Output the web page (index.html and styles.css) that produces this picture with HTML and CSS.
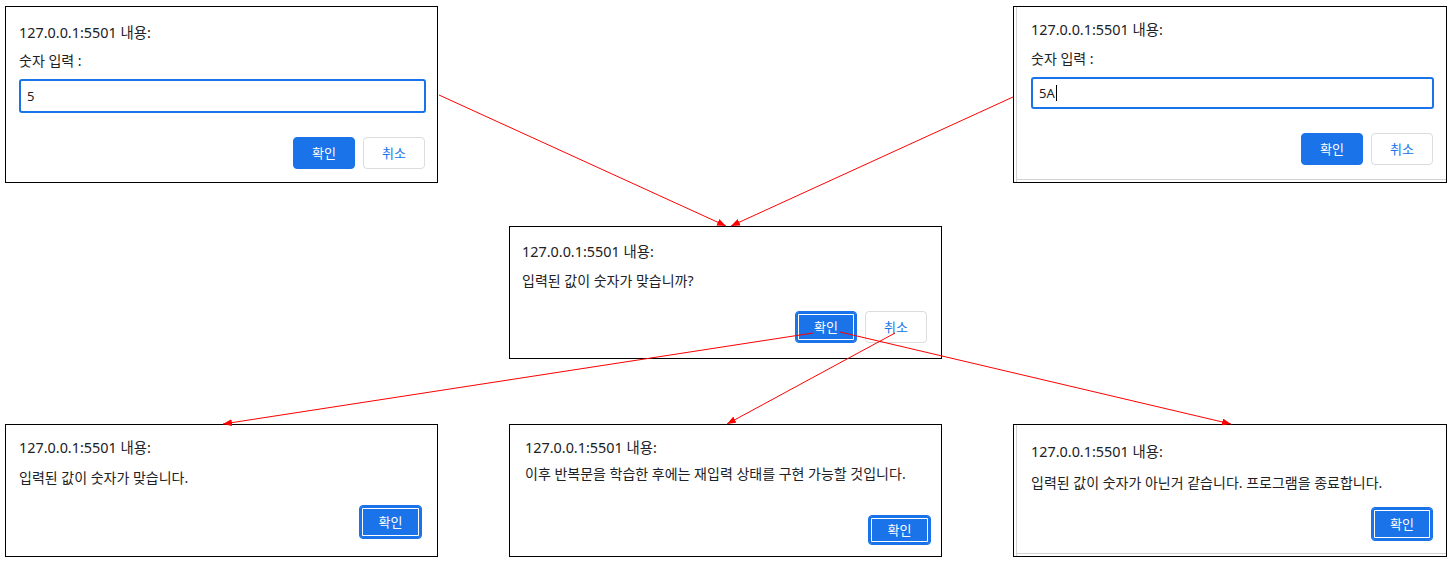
FILE: index.html
```html
<!DOCTYPE html>
<html lang="ko">
<head>
<meta charset="utf-8">
<title>prompt / confirm / alert flow</title>
<link rel="stylesheet" href="styles.css">
</head>
<body>
<main class="board">
  <div class="row row--top">
    <section class="dialog dialog--tl">
      <div class="dialog__title">127.0.0.1:5501 내용:</div>
      <div class="dialog__msg">숫자 입력 :</div>
      <div class="dialog__input">5</div>
      <div class="dialog__actions">
        <button class="btn btn--primary">확인</button>
        <button class="btn btn--secondary">취소</button>
      </div>
    </section>
    <section class="dialog dialog--tr dialog--shadow">
      <div class="dialog__title">127.0.0.1:5501 내용:</div>
      <div class="dialog__msg">숫자 입력 :</div>
      <div class="dialog__input dialog__input--short">5A<span class="caret"></span></div>
      <div class="dialog__actions">
        <button class="btn btn--primary">확인</button>
        <button class="btn btn--secondary">취소</button>
      </div>
    </section>
  </div>

  <div class="row row--mid">
    <section class="dialog dialog--m">
      <div class="dialog__title">127.0.0.1:5501 내용:</div>
      <div class="dialog__msg">입력된 값이 숫자가 맞습니까?</div>
      <div class="dialog__actions">
        <button class="btn btn--primary btn--focus">확인</button>
        <button class="btn btn--secondary">취소</button>
      </div>
    </section>
  </div>

  <div class="row row--bottom">
    <section class="dialog dialog--bl">
      <div class="dialog__title">127.0.0.1:5501 내용:</div>
      <div class="dialog__msg">입력된 값이 숫자가 맞습니다.</div>
      <div class="dialog__actions">
        <button class="btn btn--primary btn--focus btn--wide">확인</button>
      </div>
    </section>
    <section class="dialog dialog--bm">
      <div class="dialog__title">127.0.0.1:5501 내용:</div>
      <div class="dialog__msg">이후 반복문을 학습한 후에는 재입력 상태를 구현 가능할 것입니다.</div>
      <div class="dialog__actions">
        <button class="btn btn--primary btn--focus btn--wide btn--low">확인</button>
      </div>
    </section>
    <section class="dialog dialog--br dialog--shadow">
      <div class="dialog__title">127.0.0.1:5501 내용:</div>
      <div class="dialog__msg">입력된 값이 숫자가 아닌거 같습니다. 프로그램을 종료합니다.</div>
      <div class="dialog__actions">
        <button class="btn btn--primary btn--focus btn--tall">확인</button>
      </div>
    </section>
  </div>
</main>

<svg class="arrows" width="1452" height="563" viewBox="0 0 1452 563" aria-hidden="true">
  <defs>
    <marker id="head" markerUnits="userSpaceOnUse" markerWidth="9" markerHeight="7" refX="9" refY="3.5" orient="auto">
      <path d="M0,0 L9,3.5 L0,7 z" fill="#ff0000"/>
    </marker>
  </defs>
  <g stroke="#ff0000" stroke-width="1" fill="none">
    <line x1="439" y1="95" x2="726" y2="226" marker-end="url(#head)"/>
    <line x1="1013" y1="97" x2="731" y2="226" marker-end="url(#head)"/>
    <line x1="813" y1="333" x2="223" y2="424" marker-end="url(#head)"/>
    <line x1="895" y1="333" x2="727" y2="424" marker-end="url(#head)"/>
    <line x1="840" y1="332" x2="1231" y2="424" marker-end="url(#head)"/>
  </g>
</svg>
</body>
</html>
```

FILE: styles.css
```css
html, body {
  margin: 0;
  padding: 0;
  background: #ffffff;
}

body {
  position: relative;
  width: 1452px;
  height: 563px;
  overflow: hidden;
  font-family: "Noto Sans", "Noto Sans CJK KR", sans-serif;
  color: #202124;
}

.board {
  display: flex;
  flex-direction: column;
  padding: 6px 0 0 5px;
}

.row {
  display: grid;
  grid-template-columns: 433px 433px 434px;
  column-gap: 71px;
}

.row--top { height: 177px; }
.row--mid { height: 133px; margin-top: 43px; }
.row--bottom { height: 133px; margin-top: 65px; }

.row--top .dialog--tr { grid-column: 3; }
.row--mid .dialog { grid-column: 2; }

.dialog {
  box-sizing: border-box;
  border: 1px solid #000;
  background: #fff;
  display: flex;
  flex-direction: column;
  min-width: 0;
}

.dialog--shadow {
  box-shadow: inset 2px 0 0 #fff, inset 3px 0 0 #d2d2d2, inset 0 -2px 0 #fff, inset 0 -3px 0 #d2d2d2;
}

.dialog__title {
  font-size: 14.4px;
  line-height: 20px;
  white-space: nowrap;
}

.dialog__msg {
  font-size: 14px;
  line-height: 18px;
  white-space: nowrap;
}

.dialog__input {
  box-sizing: border-box;
  height: 34px;
  margin-top: 9px;
  border: 2px solid #1a73e8;
  border-radius: 3px;
  padding: 0 6px;
  display: flex;
  align-items: center;
  font-size: 13px;
  color: #202124;
}

.dialog__input--short { height: 32px; }

.caret {
  display: inline-block;
  width: 1px;
  height: 16px;
  margin-left: 1px;
  background: #000;
}

.dialog__actions {
  margin-top: auto;
  display: flex;
  justify-content: flex-end;
  gap: 8px;
}

.btn {
  box-sizing: border-box;
  width: 62px;
  height: 32px;
  padding: 0;
  margin: 0;
  border-radius: 4px;
  font-family: "Noto Sans", "Noto Sans CJK KR", sans-serif;
  font-size: 13px;
  line-height: 1;
  display: flex;
  align-items: center;
  justify-content: center;
}

.btn--primary {
  background: #1a73e8;
  border: 1px solid #1a73e8;
  color: #fff;
}

.btn--secondary {
  background: #fff;
  border: 1px solid #dadce0;
  color: #1a73e8;
}

.btn--focus {
  box-shadow: inset 0 0 0 2px #1a73e8, inset 0 0 0 3px #fff;
  border-color: #1a73e8;
}

.btn--wide { width: 63px; height: 34px; }
.btn--low { height: 30px; }
.btn--tall { height: 34px; }

/* per-screenshot inner spacing (each dialog was captured separately) */
.dialog--tl { padding: 16px 11px 13px 13px; }
.dialog--tl .dialog__msg { margin-top: 9px; }
.dialog--tl .dialog__actions { margin-right: 1px; }

.dialog--tr { padding: 13px 12px 17px 17px; }
.dialog--tr .dialog__msg { margin-top: 10px; }
.dialog--tr .dialog__actions { margin-right: 1px; }

.dialog--m { padding: 15px 14px 15px 12px; }
.dialog--m .dialog__msg { margin-top: 10px; }

.dialog--bl { padding: 13px 15px 17px 13px; }
.dialog--bl .dialog__msg { margin-top: 11px; }

.dialog--bm { padding: 13px 10px 11px 15px; }
.dialog--bm .dialog__msg { margin-top: 7px; }

.dialog--br { padding: 17px 13px 15px 17px; }
.dialog--br .dialog__msg { margin-top: 12px; }

.arrows {
  position: absolute;
  left: 0;
  top: 0;
  pointer-events: none;
}
```
